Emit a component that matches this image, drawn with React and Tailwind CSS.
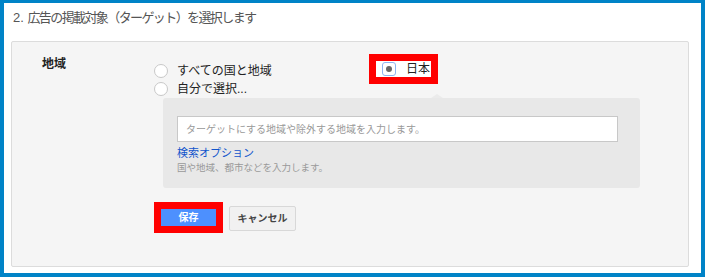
import React from 'react';

const Radio = ({ label }) => (
  <div className="flex items-center h-[18px]">
    <span className="w-[14px] h-[14px] rounded-full border border-[#c8c8c8] bg-white" />
    <span className="ml-[9px] text-[12px] leading-[14px] text-[#222]">{label}</span>
  </div>
);

export default function App() {
  return (
    <div className="w-[705px] h-[277px] bg-[#0083c7] pt-[3px] px-[4px] pb-[4px] font-['Liberation_Sans','Noto_Sans_CJK_JP',sans-serif]">
      <div className="h-full bg-white pl-[7px] pr-[12px] flex flex-col">
        {/* header */}
        <div className="h-[38px] pt-[6px] pl-[2px] text-[13px] leading-[17px] text-[#555]">
          <span>2. </span>
          <span className="tracking-[-1.6px]">広告の掲載対象（ターゲット）を選択します</span>
        </div>

        {/* panel */}
        <div className="h-[226px] bg-[#f5f5f5] border border-[#dcdcdc] rounded-[2px] flex">
          <div className="w-[142px] pl-[30px] pt-[14px] text-[12px] leading-[16px] font-bold text-[#222]">地域</div>

          <div className="flex flex-col">
            <div className="h-[44px] mt-[12px] flex">
              <div className="w-[215px] pt-[8px] flex flex-col">
                <Radio label="すべての国と地域" />
                <Radio label="自分で選択..." />
              </div>
              <div className="w-[69px] h-[30px] border-[7px] border-[#ff0000] bg-white flex items-center">
                <span className="ml-[6px] w-[14px] h-[14px] rounded-[3px] border border-[#8fb4f0] bg-white flex items-center justify-center">
                  <span className="w-[6px] h-[6px] rounded-full bg-[#666]" />
                </span>
                <span className="ml-[10px] text-[12px] leading-[14px] text-[#222]">日本</span>
              </div>
            </div>

            {/* sub panel */}
            <div className="relative ml-[9px] w-[477px] h-[90px] bg-[#e8e8e8] rounded-[3px] pt-[18px] pl-[14px]">
              <span className="absolute -top-[4px] left-[268px] w-0 h-0 border-l-[6px] border-r-[6px] border-b-[4px] border-l-transparent border-r-transparent border-b-[#ebebeb]" />
              <div className="w-[441px] h-[26px] bg-white border border-[#c8c8c8] flex items-center pl-[8px] text-[10px] text-[#999]">
                ターゲットにする地域や除外する地域を入力します。
              </div>
              <div className="mt-[4px] text-[11px] leading-[14px] text-[#1155cc]">検索オプション</div>
              <div className="mt-[2px] text-[9.5px] leading-[12px] text-[#999]">国や地域、都市などを入力します。</div>
            </div>

            {/* buttons */}
            <div className="mt-[14px] flex items-start">
              <div className="w-[69px] h-[31px] border-[7px] border-[#ff0000] bg-[#4d90fe] flex items-center justify-center text-[10px] font-bold text-white">
                保存
              </div>
              <div className="ml-[6px] mt-[4px] w-[67px] h-[25px] rounded-[2px] border border-[#d8d8d8] bg-[#f1f1f1] flex items-center justify-center text-[10px] font-bold text-[#444]">
                キャンセル
              </div>
            </div>
          </div>
        </div>
      </div>
    </div>
  );
}
